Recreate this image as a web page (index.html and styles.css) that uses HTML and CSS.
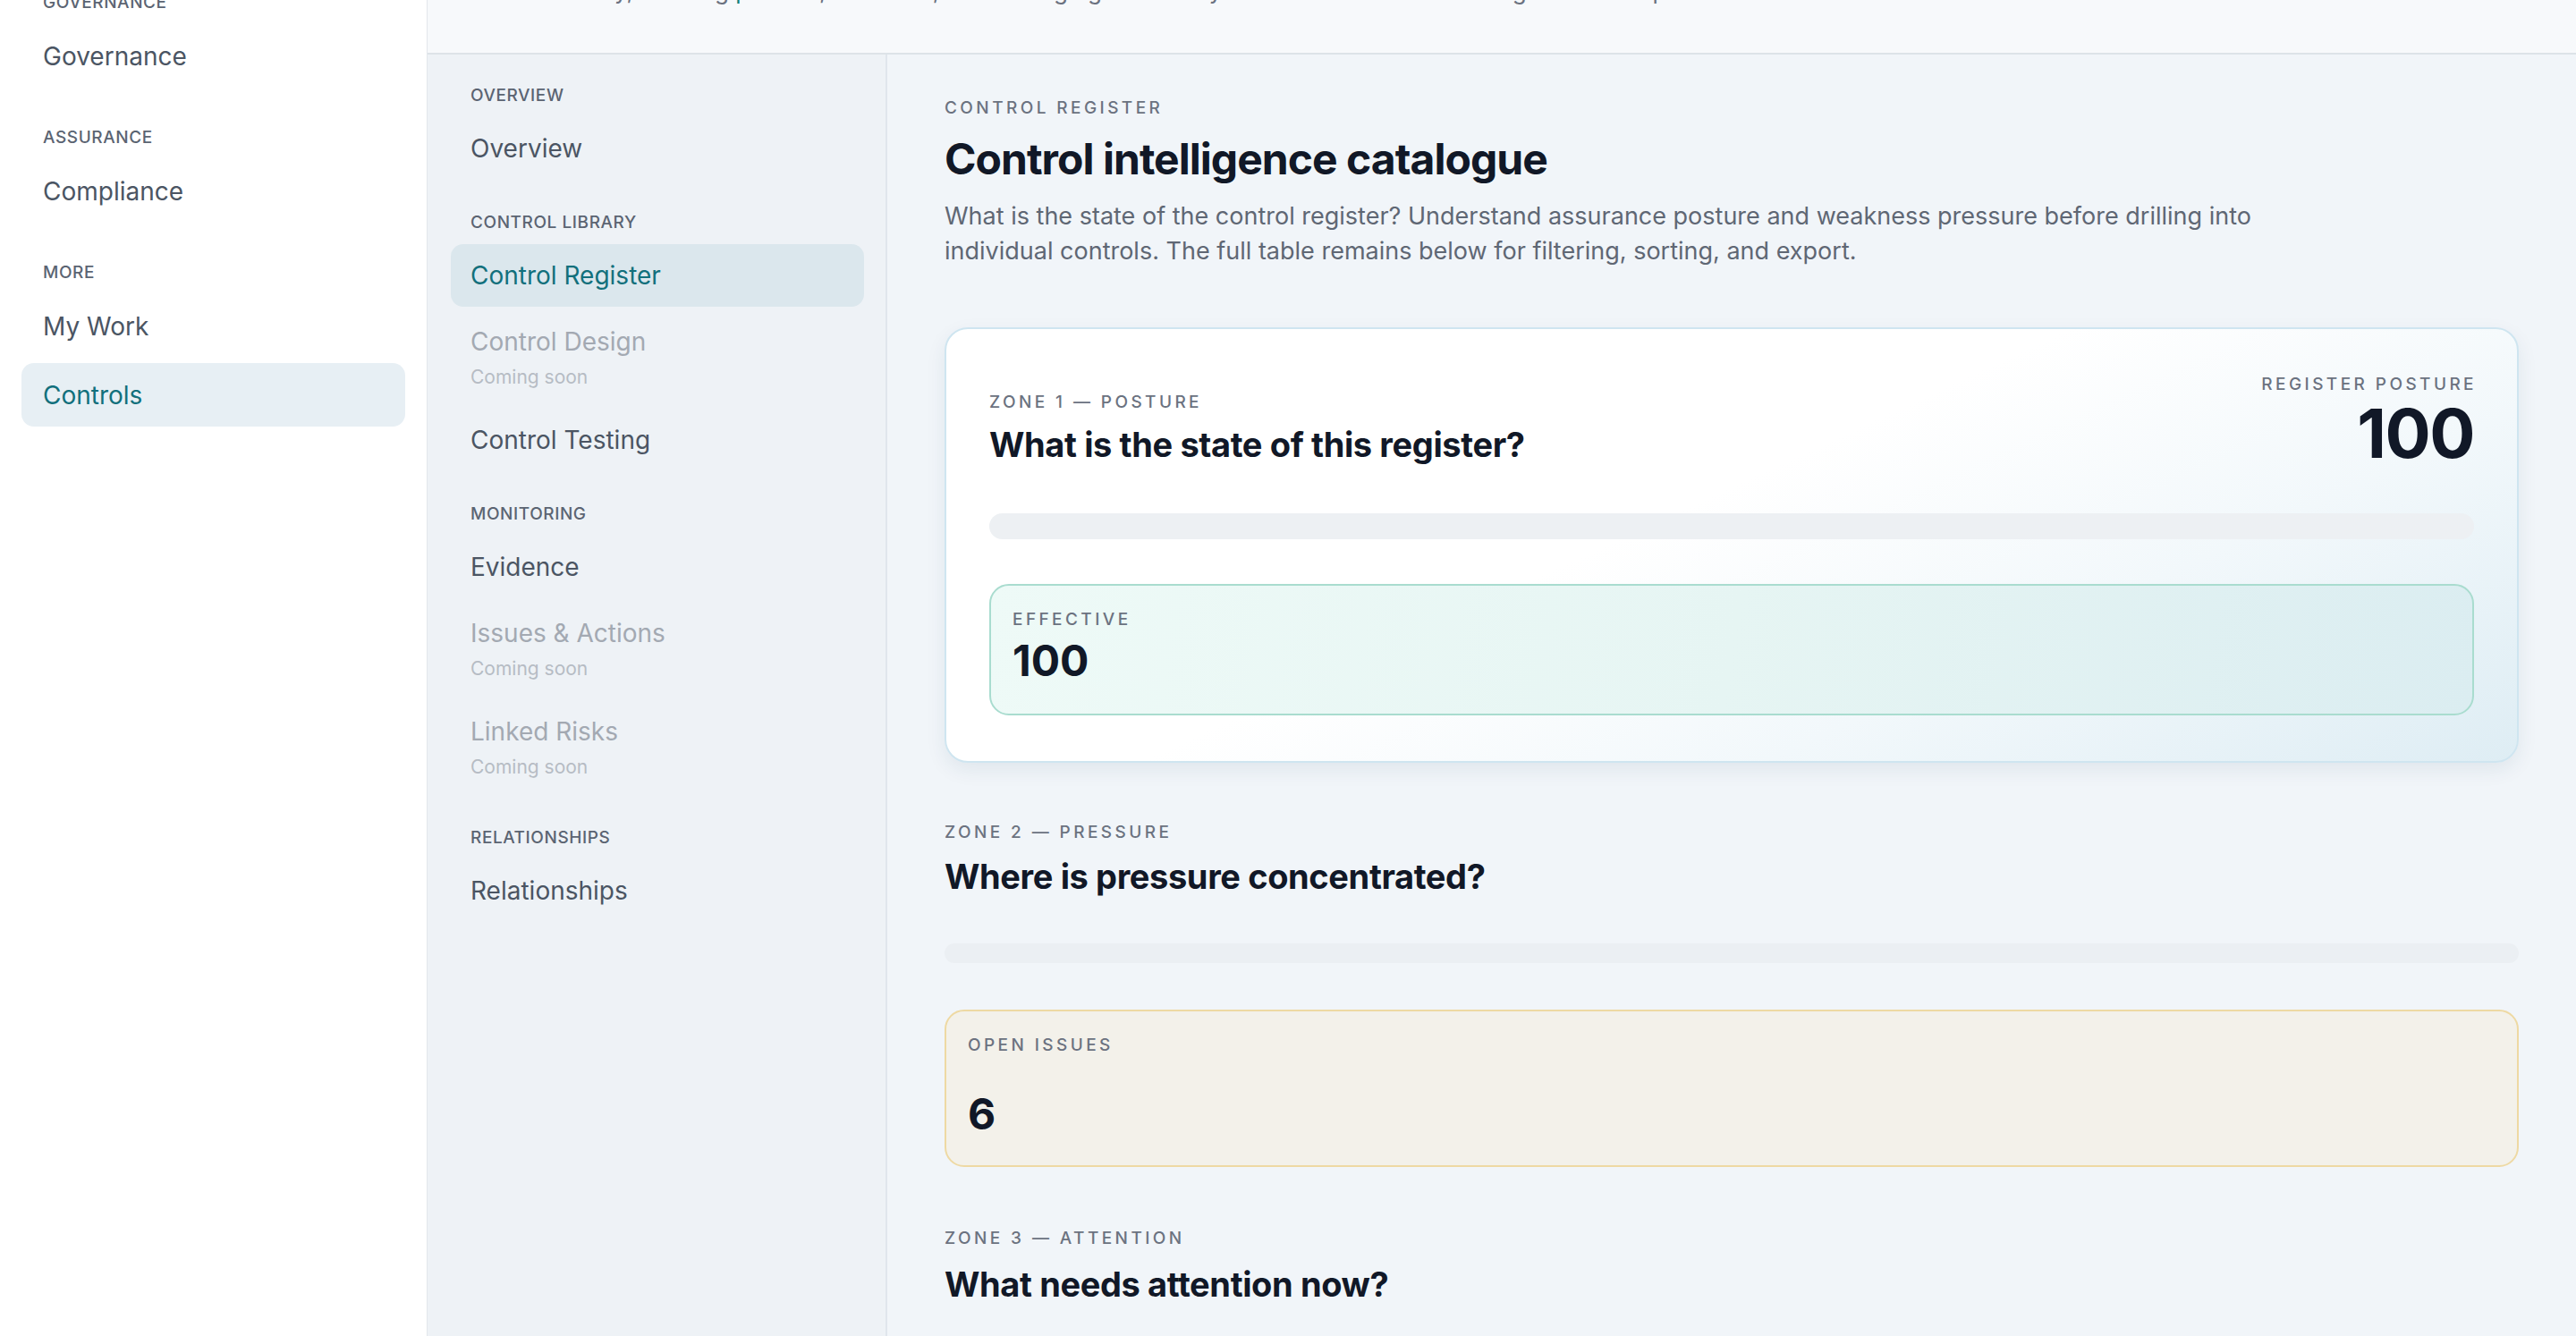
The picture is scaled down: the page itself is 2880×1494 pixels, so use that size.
FILE: index.html
```html
<!DOCTYPE html>
<html lang="en">

<head>
    <meta charset="UTF-8">
    <meta name="viewport" content="width=device-width, initial-scale=1.0">
    <title>Control Register</title>
    <link rel="stylesheet" href="styles.css">
</head>

<body>
    <div class="app">
        <aside class="sidebar">
            <div class="nav-group first">
                <div class="nav-label">Governance</div>
                <a class="nav-item">Governance</a>
            </div>
            <div class="nav-group">
                <div class="nav-label">Assurance</div>
                <a class="nav-item">Compliance</a>
            </div>
            <div class="nav-group">
                <div class="nav-label">More</div>
                <a class="nav-item">My Work</a>
                <a class="nav-item active">Controls</a>
            </div>
        </aside>

        <div class="workspace">
            <header class="topbar">
                <p class="topbar-sub">Control library, tracking <span class="accent">posture</span>, evidence, and testing against every linked framework and obligation in scope.</p>
            </header>

            <div class="workspace-body">
                <nav class="subnav">
                    <div class="sub-group">
                        <div class="nav-label">Overview</div>
                        <a class="sub-item">Overview</a>
                    </div>
                    <div class="sub-group">
                        <div class="nav-label">Control library</div>
                        <a class="sub-item active">Control Register</a>
                        <a class="sub-item disabled">Control Design<span class="soon">Coming soon</span></a>
                        <a class="sub-item">Control Testing</a>
                    </div>
                    <div class="sub-group">
                        <div class="nav-label">Monitoring</div>
                        <a class="sub-item">Evidence</a>
                        <a class="sub-item disabled">Issues &amp; Actions<span class="soon">Coming soon</span></a>
                        <a class="sub-item disabled">Linked Risks<span class="soon">Coming soon</span></a>
                    </div>
                    <div class="sub-group">
                        <div class="nav-label">Relationships</div>
                        <a class="sub-item">Relationships</a>
                    </div>
                </nav>

                <main class="content">
                    <div class="eyebrow">Control register</div>
                    <h1 class="page-title">Control intelligence catalogue</h1>
                    <p class="page-desc">What is the state of the control register? Understand assurance posture and weakness pressure before drilling into individual controls. The full table remains below for filtering, sorting, and export.</p>

                    <!-- zone 1 -->
                    <section class="zone zone-card">
                        <div class="zone-head">
                            <div>
                                <div class="eyebrow">Zone 1 — Posture</div>
                                <h2 class="zone-title">What is the state of this register?</h2>
                            </div>
                            <div class="posture">
                                <div class="eyebrow">Register posture</div>
                                <div class="posture-value">100</div>
                            </div>
                        </div>
                        <div class="track"></div>
                        <div class="stat stat-good">
                            <div class="eyebrow">Effective</div>
                            <div class="stat-value">100</div>
                        </div>
                    </section>

                    <!-- zone 2 -->
                    <section class="zone">
                        <div class="eyebrow">Zone 2 — Pressure</div>
                        <h2 class="zone-title">Where is pressure concentrated?</h2>
                        <div class="track faint"></div>
                        <div class="stat stat-warn">
                            <div class="eyebrow">Open issues</div>
                            <div class="stat-value">6</div>
                        </div>
                    </section>

                    <!-- zone 3 -->
                    <section class="zone">
                        <div class="eyebrow">Zone 3 — Attention</div>
                        <h2 class="zone-title">What needs attention now?</h2>
                    </section>
                </main>
            </div>
        </div>
    </div>
</body>

</html>
```

FILE: styles.css
```css
* {
    box-sizing: border-box;
}

body {
    margin: 0;
    font-family: Inter, "Noto Sans", sans-serif;
    color: #111827;
    background: #f1f5f9;
}

.app {
    display: flex;
    height: 100vh;
    overflow: hidden;
}

/* left sidebar */
.sidebar {
    width: 478px;
    flex-shrink: 0;
    background: #ffffff;
    border-right: 1px solid #e3e7ec;
    padding: 0 24px;
    display: flex;
    flex-direction: column;
    gap: 44px;
}

.nav-group {
    display: flex;
    flex-direction: column;
    gap: 6px;
}

.nav-group.first {
    margin-top: -9px;
}

.nav-label {
    font-size: 19px;
    line-height: 24px;
    font-weight: 500;
    letter-spacing: 0.03em;
    text-transform: uppercase;
    color: #5b6472;
    padding-left: 24px;
    margin-bottom: 6px;
}

.nav-item {
    display: block;
    font-size: 28px;
    line-height: 34px;
    padding: 18.5px 24px;
    border-radius: 14px;
    color: #4b5563;
}

.nav-item.active {
    background: #e7eff4;
    color: #12707c;
}

/* right side */
.workspace {
    flex: 1;
    display: flex;
    flex-direction: column;
    min-width: 0;
}

.topbar {
    height: 61px;
    flex-shrink: 0;
    background: #f7f9fb;
    border-bottom: 2px solid #dde3e8;
    padding-left: 49px;
    overflow: hidden;
}

.topbar-sub {
    margin: -27px 0 0;
    font-size: 26px;
    line-height: 34px;
    color: #6b7280;
    white-space: nowrap;
}

.topbar-sub .accent {
    color: #12807a;
}

.workspace-body {
    flex: 1;
    display: flex;
    min-height: 0;
}

.subnav {
    width: 514px;
    flex-shrink: 0;
    background: #eef2f6;
    border-right: 2px solid #e0e6ec;
    padding: 34px 24px 0 26px;
    display: flex;
    flex-direction: column;
    gap: 36px;
}

.sub-group {
    display: flex;
    flex-direction: column;
    gap: 4px;
}

.sub-group .nav-label {
    padding-left: 22px;
    margin-bottom: 8px;
}

.sub-item {
    display: flex;
    flex-direction: column;
    font-size: 28px;
    line-height: 34px;
    padding: 18px 22px;
    border-radius: 14px;
    color: #4b5563;
}

.sub-item.active {
    background: #dbe7ed;
    color: #12707c;
}

.sub-item.disabled {
    color: #a3a9b2;
}

.soon {
    font-size: 21px;
    line-height: 26px;
    margin-top: 10px;
    color: #b6bcc4;
}

/* main content */
.content {
    flex: 1;
    min-width: 0;
    padding: 48px 64px 0;
}

.eyebrow {
    font-size: 19px;
    line-height: 24px;
    font-weight: 500;
    letter-spacing: 0.18em;
    text-transform: uppercase;
    color: #6b7280;
}

.page-title {
    margin: 16px 0 0;
    font-size: 48px;
    line-height: 58px;
    font-weight: 700;
    letter-spacing: -0.02em;
    color: #111827;
}

.page-desc {
    margin: 15px 0 0;
    max-width: 1540px;
    font-size: 27px;
    line-height: 39px;
    color: #5f6774;
}

.zone {
    margin-top: 66px;
}

.zone-card {
    background: linear-gradient(155deg, #ffffff 45%, #f2f8fb 70%, #deedf4 100%);
    border: 2px solid #cfe5f0;
    border-radius: 26px;
    padding: 50px 48px 51px;
    box-shadow: 0 8px 22px rgba(30, 60, 90, 0.08);
}

.zone-head {
    display: flex;
    justify-content: space-between;
    align-items: flex-end;
}

.zone-title {
    margin: 14px 0 0;
    font-size: 38px;
    line-height: 46px;
    font-weight: 700;
    letter-spacing: -0.01em;
    color: #111827;
}

.zone-head .zone-title {
    margin-top: 12px;
}

.posture {
    text-align: right;
}

.posture .eyebrow {
    margin-right: -3px;
}

.posture-value {
    margin-top: 6px;
    font-size: 76px;
    line-height: 72px;
    font-weight: 700;
    letter-spacing: -0.02em;
    color: #111827;
}

.track {
    margin-top: 54px;
    height: 29px;
    border-radius: 15px;
    background: #edf0f3;
}

.track.faint {
    margin-top: 52px;
    height: 22px;
    background: #ebeff3;
}

.stat {
    margin-top: 50px;
    border-radius: 22px;
    border: 2px solid;
    padding: 26px 24px 31px;
}

.stat-value {
    margin-top: 6px;
    font-size: 48px;
    line-height: 56px;
    font-weight: 700;
    color: #111827;
}

.stat-good {
    border-color: #a9dccf;
    background: linear-gradient(100deg, #eefaf7 0%, #e6f5f3 50%, #dbedf1 100%);
}

.stat-warn {
    margin-top: 52px;
    border-color: #eed9a3;
    background: #f3f1ea;
    padding-bottom: 29px;
}

.stat-warn .stat-value {
    margin-top: 37px;
}

.stat-warn + .zone,
.zone + .zone:last-child {
    margin-top: 68px;
}

.zone:last-child .zone-title {
    margin-top: 16px;
}
```
